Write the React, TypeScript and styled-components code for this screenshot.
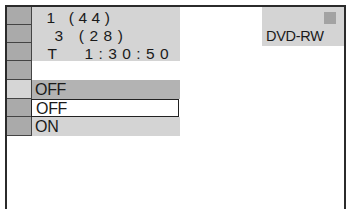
import React from 'react'
import styled, { createGlobalStyle } from 'styled-components'

const GlobalStyle = createGlobalStyle`
  html, body {
    margin: 0;
    padding: 0;
    background: #fff;
  }
  body {
    font-family: "Liberation Sans", Arial, sans-serif;
    color: #1a1a1a;
  }
`

const rowHeights = [18, 18, 18, 19, 19, 18, 19]

const options = [
  { label: 'OFF', tone: 'dark' as const },
  { label: 'OFF', tone: 'selected' as const },
  { label: 'ON', tone: 'light' as const },
]

const App = (): React.ReactElement => {
  return (
    <>
      <GlobalStyle />
      <Frame>
        <Menu>
          {rowHeights.map((_, i) => (
            <IconCell key={i} $row={i + 1} $light={i === 4} />
          ))}
          <InfoBlock>
            <InfoLine $indent={14.5}>1 (44)</InfoLine>
            <InfoLine $indent={22.5} $spacing={5.6}>3 (28)</InfoLine>
            <InfoLine $indent={15.5}>
              T<Time>1:30:50</Time>
            </InfoLine>
          </InfoBlock>
          {options.map((o, i) => (
            <Option key={i} $row={i + 5} $tone={o.tone}>
              {o.label}
            </Option>
          ))}
        </Menu>
        <DiscBox>
          <DiscMark />
          <DiscLabel>DVD-RW</DiscLabel>
        </DiscBox>
      </Frame>
    </>
  )
}

const Frame = styled.div`
  margin: 5px 0 0 5px;
  width: 337px;
  height: 202px;
  border: 2px solid #2b2b2b;
  border-bottom: none;
  display: flex;
  justify-content: space-between;
  align-items: flex-start;
`

const Menu = styled.div`
  display: grid;
  grid-template-columns: 25px 148px;
  grid-template-rows: ${rowHeights.map((h) => `${h}px`).join(' ')};
`

const IconCell = styled.div<{ $row: number; $light: boolean }>`
  grid-column: 1;
  grid-row: ${(p) => p.$row};
  background: ${(p) => (p.$light ? '#d6d6d6' : '#aaaaaa')};
  border-right: 1px solid #444;
  border-bottom: 1px solid #444;
`

const InfoBlock = styled.div`
  grid-column: 2;
  grid-row: 1 / 4;
  background: #d4d4d4;
  padding-top: 2px;
  font-size: 15.5px;
`

const InfoLine = styled.div<{ $indent: number; $spacing?: number }>`
  height: 18px;
  line-height: 18px;
  padding-left: ${(p) => p.$indent}px;
  letter-spacing: ${(p) => p.$spacing ?? 4.6}px;
  white-space: pre;
`

const Time = styled.span`
  margin-left: 23px;
  letter-spacing: 5.4px;
`

const toneBg = {
  dark: '#b3b3b3',
  selected: '#ffffff',
  light: '#d4d4d4',
}

const Option = styled.div<{ $row: number; $tone: 'dark' | 'selected' | 'light' }>`
  grid-column: 2;
  grid-row: ${(p) => p.$row};
  background: ${(p) => toneBg[p.$tone]};
  border: ${(p) => (p.$tone === 'selected' ? '1px solid #222' : 'none')};
  margin-left: ${(p) => (p.$tone === 'selected' ? '-1px' : '0')};
  margin-right: ${(p) => (p.$tone === 'selected' ? '1px' : '0')};
  padding-left: ${(p) => (p.$tone === 'selected' ? '4px' : '3px')};
  padding-top: 1px;
  font-size: 16px;
  letter-spacing: -0.3px;
  line-height: ${(p) => (p.$tone === 'selected' ? '15px' : '17px')};
`

const DiscBox = styled.div`
  width: 82px;
  height: 39px;
  box-sizing: border-box;
  background: #d4d4d4;
  padding: 5px 8px 0 4px;
  display: flex;
  flex-direction: column;
`

const DiscMark = styled.div`
  align-self: flex-end;
  width: 12px;
  height: 12px;
  background: #a3a3a3;
`

const DiscLabel = styled.div`
  margin-top: 5px;
  font-size: 14.5px;
  line-height: 15px;
  letter-spacing: -0.3px;
`

export default App
